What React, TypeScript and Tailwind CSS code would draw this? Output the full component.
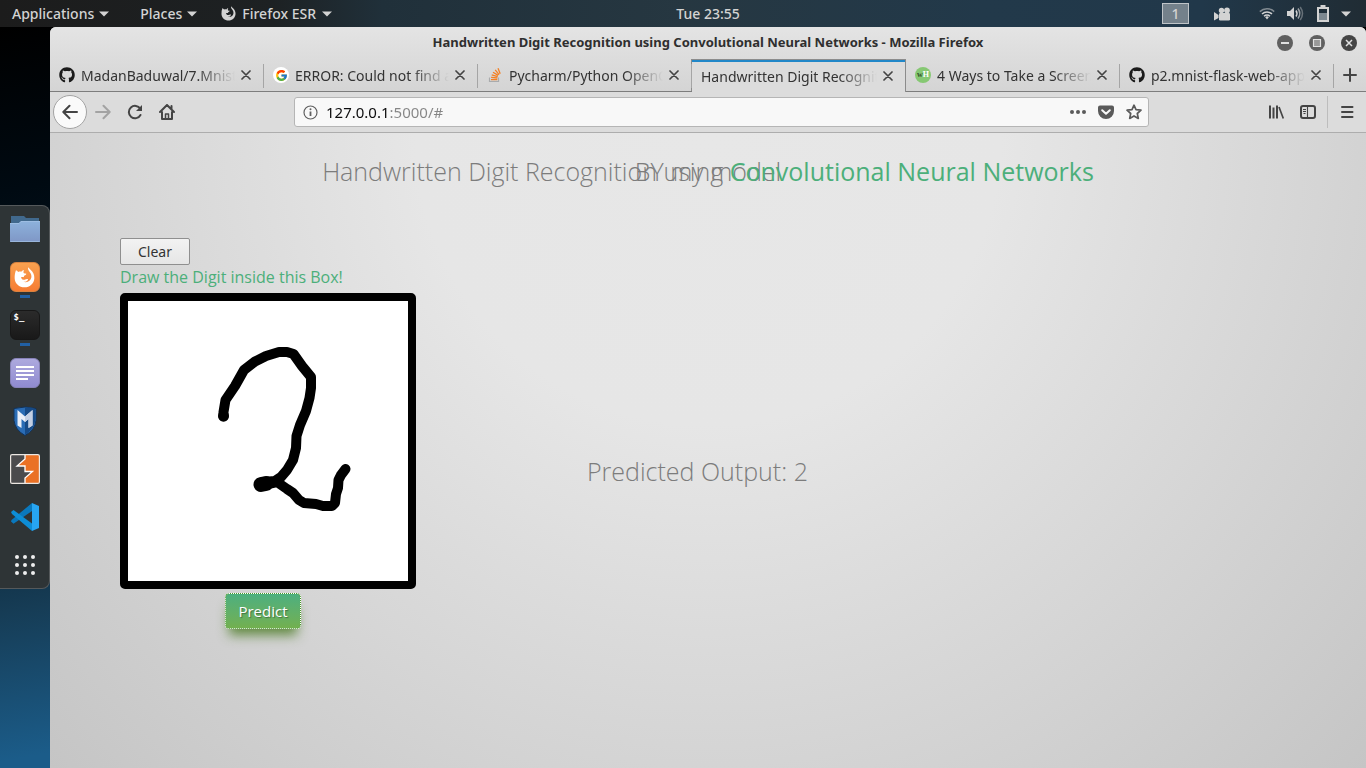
import React from "react";
import { FaGithub } from "react-icons/fa";
import { FcGoogle } from "react-icons/fc";

const Caret = ({ className = "" }: { className?: string }) => (
  <svg className={className} width="10" height="6" viewBox="0 0 10 6" fill="currentColor" aria-hidden="true">
    <path d="M0 .5h10L5 5.5z" />
  </svg>
);

const FlameFox = ({ size }: { size: number }) => (
  <svg width={size} height={size} viewBox="0 0 32 32" fill="currentColor" aria-hidden="true">
    <path d="M3 5c1 0 2.500 1.600 3.600 2.500 1.500-.6 3-.6 4.500-.2C12.400 5.500 13.800 4.700 15.500 4.500c-1 1.500-1.300 3-.8 4.700.8 1 2.500.9 4.100 1-.2 1.600-2 2.300-3.600 3.200-.3.800 0 1.500 0 2.100-1.500-.6-3-.4-4.500 0 .4 2.800 3 4.300 5.700 3.800 1.800-.4 2.700-1.700 5.100-.7-1 3-4 4.400-7 3.900 5.500 2 11-1 12-6.700.4-3-.6-5.800-2.600-8.300C22 5.500 21 3.500 21.500.500c1.200 1.500 2.500 2.400 3.700 3.600 3.900 3.400 6 7.800 5.800 12.900C30.600 25 24 31 16 31S1.200 25 1 17C.9 12.500 1.600 8.400 3 5z" />
  </svg>
);

const StackIcon = () => (
  <svg width="16" height="16" viewBox="0 0 16 16" fill="none" aria-hidden="true">
    <path d="M2.500 10.500v4h9v-4" stroke="#a9abad" strokeWidth="1.200" />
    <path d="M4 12.700h6.300M4.100 10.300l6.300.7M4.700 7.800l6 1.800M6 5.200l5.200 3.200M8.200 2.800l3.900 4.800M11 1.200l2.200 5.600" stroke="#f48024" strokeWidth="1.300" />
  </svg>
);

const WikiHow = () => (
  <span className="flex size-4 items-center justify-center rounded-full bg-[#86c873] font-['Liberation_Serif',serif] text-[8px] leading-none font-bold text-[#31512b]">
    w<span className="text-white">H</span>
  </span>
);

const Cross = () => (
  <svg width="10" height="10" viewBox="0 0 10 10" stroke="#444" strokeWidth="1.700" strokeLinecap="round" aria-hidden="true">
    <path d="M1 1l8 8M9 1l-8 8" />
  </svg>
);

type TabInfo = { title: string; icon?: React.ReactNode; active?: boolean };

const tabs: TabInfo[] = [
  { title: "MadanBaduwal/7.Mnist", icon: <FaGithub size={16} color="#1b1b1b" /> },
  {
    title: "ERROR: Could not find a version",
    icon: (
      <span className="flex size-4 items-center justify-center rounded-full bg-white">
        <FcGoogle size={13} />
      </span>
    ),
  },
  { title: "Pycharm/Python OpenCV", icon: <StackIcon /> },
  { title: "Handwritten Digit Recognition", active: true },
  { title: "4 Ways to Take a Screenshot", icon: <WikiHow /> },
  { title: "p2.mnist-flask-web-app", icon: <FaGithub size={16} color="#1b1b1b" /> },
];

function Tab({ title, icon, active }: TabInfo) {
  return (
    <div
      className={
        active
          ? "-ml-px flex min-w-0 flex-1 items-center border-x border-t border-x-[#8c8c8c] border-t-[#8c8c8c] bg-[#dcdcdc] pr-3 pl-[9px] shadow-[inset_0_2px_0_#2187c8]"
          : "relative flex min-w-0 flex-1 items-center border-b border-[#7d7d7d] pr-[13px] pl-[9px] after:absolute after:top-[5px] after:right-0 after:h-6 after:w-px after:bg-[#a5a5a5]"
      }
    >
      {icon && <span className="mr-[6px] shrink-0">{icon}</span>}
      <button className="min-w-0 flex-1 overflow-hidden text-left text-[14px] whitespace-nowrap text-[#333] [mask-image:linear-gradient(90deg,#000_calc(100%-38px),transparent)]">
        {title}
      </button>
      <button aria-label="Close tab" className="ml-[6px] shrink-0">
        <Cross />
      </button>
    </div>
  );
}

function TopBar() {
  return (
    <header className="grid h-[27px] shrink-0 grid-cols-[1fr_auto_1fr] items-center bg-[linear-gradient(90deg,#1c1c1c_0%,#1d2123_20%,#20303a_28%,#263741_50%,#22394a_72%,#21384a_88%,#202c34_100%)] text-[14px] font-medium text-[#d3d3d3]">
      <nav className="flex items-center pl-3">
        <button className="flex items-center gap-[5px]">Applications <Caret /></button>
        <button className="ml-[31px] flex items-center gap-[5px]">Places <Caret /></button>
        <button className="ml-6 flex items-center gap-[6px]">
          <FlameFox size={15} />Firefox ESR <Caret />
        </button>
      </nav>
      <div className="pl-[50px]">Tue 23:55</div>
      <div className="flex items-center justify-end pr-[15px]">
        <span className="flex h-[21px] w-[27px] items-center justify-center border border-[#bfc4c8] bg-[#74818b]">1</span>
        <svg className="ml-[25px]" width="17" height="14" viewBox="0 0 17 14" fill="currentColor" aria-hidden="true">
          <circle cx="7.500" cy="3.500" r="2.700" /><circle cx="13" cy="3.500" r="2.900" />
          <rect x="5" y="6" width="11" height="7.500" rx="1.200" /><path d="M0 5l4.500 3v3L0 13.500z" />
        </svg>
        <svg className="ml-7" width="16" height="13" viewBox="0 0 16 13" fill="none" stroke="currentColor" strokeWidth="1.500" aria-hidden="true">
          <path d="M.8 4.600a10.500 10.500 0 0 1 14.400 0" opacity=".55" /><path d="M3 7a7.300 7.300 0 0 1 10 0" /><path d="M5 9.300a4.300 4.300 0 0 1 6 0" />
          <path d="M8 12.500l-1.800-2.200a2.500 2.500 0 0 1 3.600 0z" fill="currentColor" stroke="none" />
        </svg>
        <svg className="ml-3" width="17" height="15" viewBox="0 0 17 15" fill="none" stroke="currentColor" strokeWidth="1.500" aria-hidden="true">
          <path d="M0 5h3l4-4v13l-4-4H0z" fill="currentColor" stroke="none" /><path d="M9 4.500q2 3 0 6" /><path d="M11 2.500q3.600 5 0 10" opacity=".7" /><path d="M13.200 1q4.600 6.500 0 13" opacity=".4" />
        </svg>
        <svg className="ml-[13px]" width="12" height="17" viewBox="0 0 12 17" aria-hidden="true">
          <path d="M1 3h10v13H1z" fill="none" stroke="#d3d3d3" strokeWidth="2" /><path d="M3.500 0h5v3h-5z" fill="#d3d3d3" /><path d="M2 8h8v7H2z" fill="#7d8890" />
        </svg>
        <Caret className="ml-3" />
      </div>
    </header>
  );
}

const DockItem = ({ label, running, children }: { label: string; running?: boolean; children: React.ReactNode }) => (
  <button
    aria-label={label}
    className={
      running
        ? "relative flex size-[30px] items-center justify-center after:absolute after:-bottom-[6px] after:h-[3px] after:w-[10px] after:bg-[#2160a4]"
        : "flex size-[30px] items-center justify-center"
    }
  >
    {children}
  </button>
);

function Dock() {
  return (
    <aside className="flex w-[50px] shrink-0 items-start bg-[linear-gradient(170deg,#000_0%,#000a12_22%,#0b2638_65%,#163c55_78%,#1b5c89_98%)] pt-[178px]">
      <div className="flex w-full flex-col items-center gap-[18px] rounded-r-lg border border-l-0 border-[#55595b] bg-[#2e3436] pt-2 pb-2">
        <DockItem label="Files">
          <svg width="30" height="28" viewBox="0 0 30 28" aria-hidden="true">
            <defs><linearGradient id="fold" x2="0" y2="1"><stop stopColor="#8db2dc" /><stop offset="1" stopColor="#7f97c6" /></linearGradient></defs>
            <path d="M1 1h13l2 2h13v8H1z" fill="#41698d" /><path d="M0 8h9l2-2h19v21H0z" fill="url(#fold)" /><path d="M0 8.500h9l2-2h19M.5 26.500h29" stroke="#a5c3e5" strokeWidth=".7" fill="none" />
          </svg>
        </DockItem>
        <DockItem label="Firefox" running>
          <span className="flex size-[30px] items-center justify-center rounded-[6px] border border-[#d9823f] bg-linear-to-b from-[#f9a14f] to-[#f67c33] text-white"><FlameFox size={21} /></span>
        </DockItem>
        <DockItem label="Terminal" running>
          <span className="flex size-[30px] items-start rounded-[6px] border border-[#171717] bg-linear-to-b from-[#2b2b2b] to-[#191919] pt-px pl-[3px] font-['DejaVu_Sans_Mono',monospace] text-[9px] leading-[11px] font-bold text-white">$_</span>
        </DockItem>
        <DockItem label="Notes">
          <svg width="30" height="30" viewBox="0 0 30 30" aria-hidden="true">
            <defs><linearGradient id="note" x2="0" y2="1"><stop stopColor="#aeaade" /><stop offset="1" stopColor="#8f8ad0" /></linearGradient></defs>
            <rect x=".5" y=".5" width="29" height="29" rx="5.500" fill="url(#note)" stroke="#8782b8" />
            <path d="M6 9h18M6 13h18M6 17h18M6 21h12" stroke="#fff" strokeWidth="2" />
          </svg>
        </DockItem>
        <DockItem label="Metasploit">
          <svg width="24" height="30" viewBox="0 0 24 30" aria-hidden="true">
            <path d="M1 2.500Q12-.5 23 2.500v12Q22 24 12 29.500 2 24 1 14.500z" fill="#2a6cb5" stroke="#123258" />
            <path d="M12 1q5.500 0 10.500 2v11Q21 23 12 29z" fill="#174a86" />
            <path d="M4.500 19.500V4L12 10.500 19.500 4v15.500L15.500 22V13L12 16l-3.500-3v9z" fill="#e9eef8" />
            <path d="M12 10.500L19.500 4v15.500L15.500 22V13L12 16z" fill="#c3cfe4" />
          </svg>
        </DockItem>
        <DockItem label="Burp Suite">
          <svg width="30" height="30" viewBox="0 0 30 30" aria-hidden="true">
            <path d="M1 1h28v28H1z" fill="#4b4b4d" /><path d="M15 1h14v28H15v-5l7.500-6.500H15V12H7l8-7z" fill="#ea7125" />
            <path d="M15 1v4L7 12h8v5.500h7.500L15 24v5" fill="none" stroke="#fff" strokeWidth="1.300" />
            <rect x=".6" y=".6" width="28.800" height="28.800" rx="1.500" fill="none" stroke="#ece7e2" strokeWidth="1.200" />
          </svg>
        </DockItem>
        <DockItem label="Visual Studio Code">
          <svg width="28" height="28" viewBox="0 0 28 28" aria-hidden="true">
            <path d="M0 18.500l2.500 2.200L21 8V0L.5 17z" fill="#0a78bd" />
            <path d="M0 9l2.500-2L21 20.500V28L1 11z" fill="#0d8dd6" /><path d="M21 0l7 3v22l-7 3z" fill="#27a5f2" />
          </svg>
        </DockItem>
        <DockItem label="Show applications">
          <svg width="20" height="20" viewBox="0 0 20 20" fill="#eee" aria-hidden="true">
            {[2, 10, 18].map((y) => [2, 10, 18].map((x) => <circle key={`${x}-${y}`} cx={x} cy={y} r="2" />))}
          </svg>
        </DockItem>
      </div>
    </aside>
  );
}

function Toolbar() {
  return (
    <div className="flex h-[41px] shrink-0 items-center border-b border-[#adadad] bg-[#dcdcdc] pl-[3px] text-[#444]">
      <button aria-label="Back" className="flex size-[34px] items-center justify-center rounded-full border border-[#a3a3a3] bg-[#fafafa]">
        <svg width="16" height="16" viewBox="0 0 16 16" fill="none" stroke="currentColor" strokeWidth="2" strokeLinecap="round" strokeLinejoin="round"><path d="M15 8H1.500M7.500 1.800L1.300 8l6.200 6.200" /></svg>
      </button>
      <button aria-label="Forward" className="ml-2 text-[#a3a3a3]">
        <svg width="16" height="16" viewBox="0 0 16 16" fill="none" stroke="currentColor" strokeWidth="2" strokeLinecap="round" strokeLinejoin="round"><path d="M1 8h13.500M8.500 1.800L14.700 8l-6.200 6.200" /></svg>
      </button>
      <button aria-label="Reload" className="ml-4">
        <svg width="16" height="16" viewBox="0 0 16 16" fill="none" stroke="currentColor" strokeWidth="2" strokeLinecap="round"><path d="M13.300 4.800A6.200 6.200 0 1 0 13.500 11" /><path d="M15 1v6H9z" fill="currentColor" stroke="none" /></svg>
      </button>
      <button aria-label="Home" className="ml-4">
        <svg width="16" height="16" viewBox="0 0 16 16" fill="none" stroke="currentColor" strokeWidth="2" strokeLinecap="round" strokeLinejoin="round"><path d="M1 8l7-7 7 7M3 8v7h10V8M12.500 2v3" /><path d="M6.500 15v-5h3v5" strokeWidth="1.500" /></svg>
      </button>
      <div className="mr-[119px] ml-[119px] flex h-[30px] min-w-0 flex-1 items-center rounded-[3px] border border-[#b5b5b5] bg-[#f8f8f8] pr-[6px] pl-2">
        <svg width="15" height="15" viewBox="0 0 15 15" fill="none" stroke="#606060" aria-hidden="true"><circle cx="7.500" cy="7.500" r="6.500" strokeWidth="1.200" /><path d="M7.500 6.500V11" strokeWidth="1.800" /><circle cx="7.500" cy="4.200" r="1" fill="#606060" stroke="none" /></svg>
        <input
          aria-label="Address"
          defaultValue="127.0.0.1:5000/#"
          className="ml-2 min-w-0 flex-1 bg-[linear-gradient(90deg,#0c0c0d_64px,#858585_64px)] bg-clip-text text-[15px] text-transparent outline-none"
        />
        <button aria-label="Page actions"><svg width="16" height="16" viewBox="0 0 16 16" fill="#5a5a5a"><circle cx="2" cy="8" r="2" /><circle cx="8" cy="8" r="2" /><circle cx="14" cy="8" r="2" /></svg></button>
        <button aria-label="Save to Pocket" className="ml-3"><svg width="16" height="16" viewBox="0 0 16 16"><path d="M2 1.500h12a2 2 0 0 1 2 2V7A8 8 0 0 1 0 7V3.500a2 2 0 0 1 2-2z" fill="#5a5a5a" /><path d="M4.200 6.200L8 9.800l3.800-3.600" fill="none" stroke="#f8f8f8" strokeWidth="2" strokeLinecap="round" strokeLinejoin="round" /></svg></button>
        <button aria-label="Bookmark" className="ml-3"><svg width="16" height="16" viewBox="0 0 16 16" fill="none" stroke="#5a5a5a" strokeWidth="1.700" strokeLinejoin="round"><path d="M8 1.200l2 4.500 5 .5-3.700 3.300 1 4.900L8 11.900l-4.300 2.500 1-4.900L1 6.200l5-.5z" /></svg></button>
      </div>
      <button aria-label="Library"><svg width="16" height="16" viewBox="0 0 16 16" fill="none" stroke="currentColor" strokeWidth="2"><path d="M2 1.500v13M5.500 3.500v11M9 1.500v13" /><path d="M11 3l4.300 11.500" strokeWidth="1.700" /></svg></button>
      <button aria-label="Sidebars" className="ml-4"><svg width="16" height="16" viewBox="0 0 16 16" fill="none" stroke="currentColor"><rect x="1" y="2" width="14" height="12" rx="2" strokeWidth="2" /><path d="M7.500 2v12M3 5.500h3M3 7.500h3M3.500 9.500h2" strokeWidth="1.100" /></svg></button>
      <span className="ml-[11px] h-8 w-px bg-[#bdbdbd]" />
      <button aria-label="Menu" className="mr-3 ml-3"><svg width="14" height="14" viewBox="0 0 14 14" stroke="currentColor" strokeWidth="2" strokeLinecap="round"><path d="M2 2h10.500M2 7h10.500M2 12h10.500" /></svg></button>
    </div>
  );
}

function Page() {
  return (
    <main className="flex-1 bg-[radial-gradient(circle_farthest-corner_at_50%_0%,#e7e7e7_0%,#e6e6e6_32%,#c5c5c5_100%)] px-[70px] pt-5 font-['Open_Sans',sans-serif]">
      <div className="grid justify-items-center text-[25px] leading-9 font-light text-[#7c7c7c]">
        <h2 className="col-start-1 row-start-1">BY my model</h2>
        <h1 className="col-start-1 row-start-1">
          Handwritten Digit Recognition using <span className="font-normal text-[#4caf7a]">Convolutional Neural Networks</span>
        </h1>
      </div>
      <div className="mt-[49px] flex items-start">
        <section className="flex w-[296px] shrink-0 flex-col items-start">
          <button className="h-[27px] w-[70px] rounded-[2px] border border-[#8f8f8f] bg-linear-to-b from-[#f2f2f2] to-[#e6e6e6] font-['Noto_Sans',sans-serif] text-[14px] text-[#333]">
            Clear
          </button>
          <p className="text-[16px] leading-6 text-[#4caf7a]">Draw the Digit inside this Box!</p>
          <div className="mt-1 size-[296px] rounded-[5px] border-8 border-black bg-white">
            <svg width="280" height="280" viewBox="128 301 280 280" fill="none" stroke="#000" strokeWidth="10" strokeLinecap="round" strokeLinejoin="round" role="img" aria-label="Drawn digit">
              <path d="M223.500 416.500L223.500 412 225.500 400 235 386 244 370 255 361.500 266 356 279 352 287 352 293.500 354 302 366 311 377 311 388 309.500 398 306 411 300 425 296.500 436 296 448 293 460 287 470 281 477 275 481 263 482 260 485.500 268 484 277 482 287 489 293 493 299 500 304 503 316 504 323 506 332 506 335 503 336 494 338 488 338.500 480 341 475 345.500 469" />
              <path d="M261 484.500L266 483.500" strokeWidth="15" /><circle cx="223.500" cy="416" r="5.500" fill="#000" stroke="none" />
            </svg>
          </div>
          <button className="mt-1 mr-[10px] h-9 w-[76px] self-center rounded-[4px] border border-[#4a9a2c] bg-linear-to-b from-[#4caf7f] to-[#72b04f] text-[15px] text-white shadow-[0_10px_12px_-4px_rgba(85,130,50,0.9)] outline-1 -outline-offset-1 outline-dotted outline-white [text-shadow:1px_1px_1px_rgba(0,0,0,0.35)]">
            Predict
          </button>
        </section>
        <output className="mt-[215px] ml-[171px] text-[25px] leading-9 font-light text-[#7c7c7c]">Predicted Output: 2</output>
      </div>
    </main>
  );
}

export default function App() {
  return (
    <div className="flex min-h-screen flex-col bg-black font-['Noto_Sans',sans-serif]">
      <TopBar />
      <div className="flex flex-1">
        <Dock />
        <div className="flex min-w-0 flex-1 flex-col overflow-hidden rounded-t-[6px] bg-[#d6d6d6]">
          <div className="bg-linear-to-b from-[#e4e4e4] to-[#d4d4d4]">
            <div className="grid h-8 grid-cols-[1fr_auto_1fr] items-center text-[13px] font-bold text-[#2f2f2f]">
              <span />
              <span>Handwritten Digit Recognition using Convolutional Neural Networks - Mozilla Firefox</span>
              <span className="flex justify-end gap-4 pr-[9px]">
                <button aria-label="Minimize"><svg width="16" height="16" viewBox="0 0 16 16"><circle cx="8" cy="8" r="8" fill="#606060" /><path d="M4 8h8" stroke="#e0e0e0" strokeWidth="2" /></svg></button>
                <button aria-label="Maximize"><svg width="16" height="16" viewBox="0 0 16 16"><circle cx="8" cy="8" r="8" fill="#606060" /><path d="M4.500 4.500h7v7h-7z" fill="#999" stroke="#e0e0e0" strokeWidth="1.200" /></svg></button>
                <button aria-label="Close"><svg width="16" height="16" viewBox="0 0 16 16"><circle cx="8" cy="8" r="8" fill="#454545" /><path d="M5 5l6 6M11 5l-6 6" stroke="#e0e0e0" strokeWidth="1.500" /></svg></button>
              </span>
            </div>
            <div className="flex h-[33px]">
              {tabs.map((t) => <Tab key={t.title} {...t} />)}
              <button aria-label="New tab" className="flex w-8 items-center justify-center border-b border-[#7d7d7d]">
                <svg width="14" height="14" viewBox="0 0 14 14" stroke="#444" strokeWidth="2" strokeLinecap="round"><path d="M7 1v12M1 7h12" /></svg>
              </button>
            </div>
          </div>
          <Toolbar />
          <Page />
        </div>
      </div>
    </div>
  );
}
